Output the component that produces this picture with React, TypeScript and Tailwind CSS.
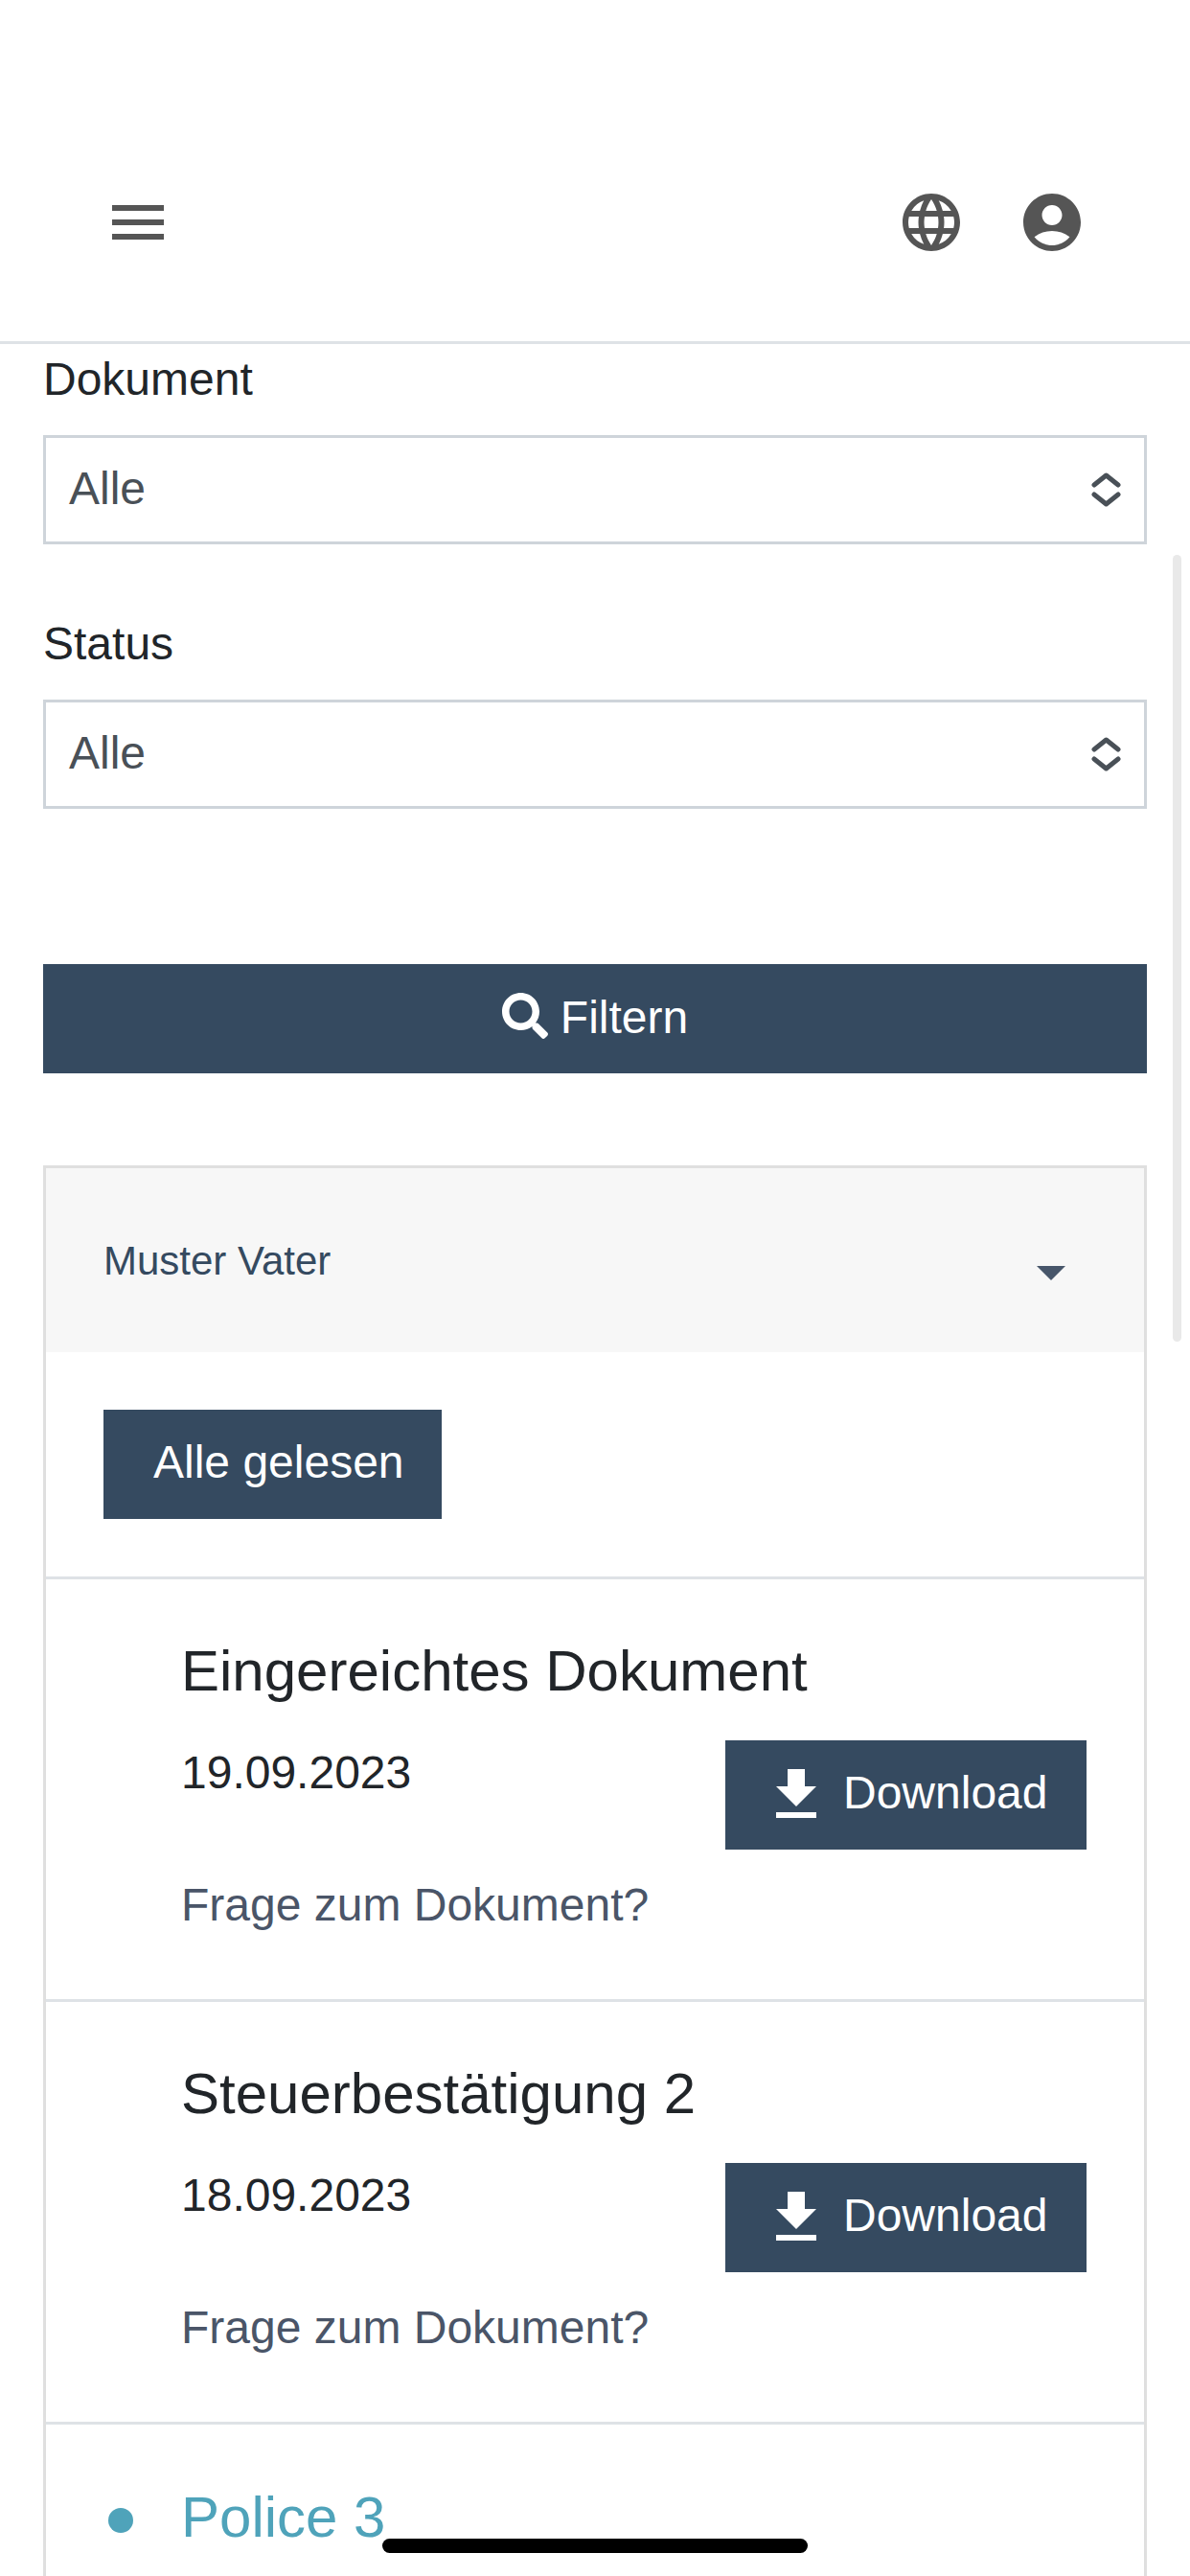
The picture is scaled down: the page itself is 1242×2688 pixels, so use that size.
import { MdAccountCircle, MdFileDownload, MdLanguage, MdMenu } from 'react-icons/md';
import { FaSearch } from 'react-icons/fa';

function SelectField({ label, className }: { label: string; className?: string }) {
  return (
    <div className={className}>
      <label className="block pt-px text-[48px] leading-[72px] text-[#212529]">{label}</label>
      <div className="mt-[22px] h-[114px] border-[3px] border-[#ced4da] bg-white flex items-center justify-between pl-[24px] pr-[24px]">
        <span className="mb-[3px] text-[48px] leading-[72px] text-[#495057]">Alle</span>
        <svg width="31" height="36" viewBox="0 0 31 36" fill="none" stroke="#495057" strokeWidth="5" strokeLinecap="round" strokeLinejoin="round">
          <path d="M3 13 15.5 3 28 13" />
          <path d="M3 23 15.5 33 28 23" />
        </svg>
      </div>
    </div>
  );
}

function DocItem({ title, date }: { title: string; date: string }) {
  return (
    <div className="border-b-[3px] border-[#dee2e6] pl-[141px] pr-[60px] pt-[60px] pb-[62px]">
      <h3 className="text-[60px] leading-[72px] text-[#212529]">{title}</h3>
      <div className="mt-[32px] flex items-start justify-between">
        <span className="mt-[2px] text-[48px] leading-[72px] text-[#212529]">{date}</span>
        <button className="mt-[4px] h-[114px] w-[377px] bg-[#354a60] text-white flex items-center pl-[38px]">
          <MdFileDownload size={72} />
          <span className="ml-[13px] mb-[5px] text-[48px] leading-[72px]">Download</span>
        </button>
      </div>
      <a className="mt-[22px] block text-[48px] leading-[72px] text-[#4a5568]">Frage zum Dokument?</a>
    </div>
  );
}

export default function App() {
  return (
    <div className="relative h-[2688px] w-[1242px] overflow-hidden bg-white font-['Liberation_Sans',Arial,sans-serif]">
      {/* header */}
      <header className="h-[359px] border-b-[3px] border-[#dee2e6] pt-[196px] pl-[108px] pr-[108px] flex items-start justify-between text-[#555555]">
        <MdMenu size={72} />
        <div className="flex gap-[54px]">
          <MdLanguage size={72} />
          <MdAccountCircle size={72} />
        </div>
      </header>

      <main className="px-[45px]">
        <SelectField label="Dokument" />
        <SelectField label="Status" className="mt-[67px]" />

        <button className="mt-[162px] h-[114px] w-full bg-[#354a60] text-white flex items-center justify-center">
          <FaSearch size={48} className="mb-[7px]" />
          <span className="ml-[13px] mb-[3px] text-[48px] leading-[72px]">Filtern</span>
        </button>

        <section className="mt-[96px] border-x-[3px] border-t-[3px] border-[#dfdfdf]">
          <div className="relative h-[192px] bg-[#f7f7f7] pl-[60px] pt-[65px]">
            <span className="block text-[42px] leading-[63px] text-[#354a60]">Muster Vater</span>
            <div className="absolute left-[1034px] top-[102px] h-0 w-0 border-x-[15px] border-t-[15px] border-x-transparent border-t-[#47566a]" />
          </div>
          <div className="border-b-[3px] border-[#dee2e6] pl-[60px] pt-[60px] pb-[60px]">
            <button className="h-[114px] w-[353px] bg-[#354a60] pl-[52px] pb-[4px] text-left text-[48px] leading-[72px] text-white">Alle gelesen</button>
          </div>

          <DocItem title="Eingereichtes Dokument" date="19.09.2023" />
          <DocItem title="Steuerbestätigung 2" date="18.09.2023" />

          <div className="flex items-start pl-[65px] pt-[61px] pb-[62px]">
            <span className="mt-[26px] h-[26px] w-[26px] rounded-full bg-[#4fa3ba]" />
            <h3 className="ml-[50px] text-[60px] leading-[72px] text-[#4fa3ba]">Police 3</h3>
          </div>
        </section>
      </main>

      {/* scrollbar + home indicator sit over the page */}
      <div className="absolute left-[1224px] top-[579px] h-[821px] w-[9px] rounded-full bg-[#e9e9e9]" />
      <div className="absolute left-[399px] top-[2649px] h-[15px] w-[444px] rounded-full bg-black" />
    </div>
  );
}
